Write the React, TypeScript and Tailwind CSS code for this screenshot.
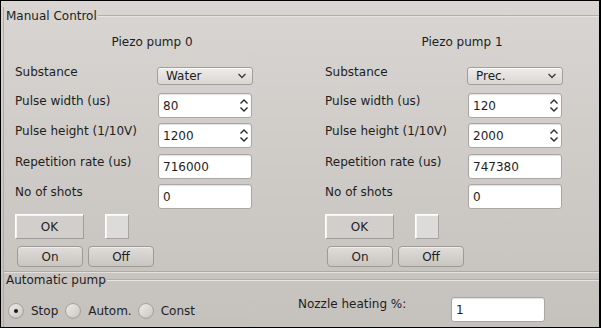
import React from "react";

function Chevron() {
  return (
    <svg width="10" height="6" viewBox="0 0 10 6" className="block">
      <path d="M1.5 1 L5 4.5 L8.5 1" fill="none" stroke="#3a3a3a" strokeWidth="1.3" />
    </svg>
  );
}

function SpinArrows() {
  return (
    <svg width="10" height="15" viewBox="0 0 10 15" className="block">
      <path d="M1.5 5.5 L5 2 L8.5 5.5" fill="none" stroke="#2a2a2a" strokeWidth="1.4" />
      <path d="M1.5 9.5 L5 13 L8.5 9.5" fill="none" stroke="#2a2a2a" strokeWidth="1.4" />
    </svg>
  );
}

function Combo({ value }: { value: string }) {
  return (
    <div className="mt-[2px] flex h-[18px] w-[96px] items-center justify-between rounded-[3px] border border-[#a29e9a] bg-linear-to-b from-[#efedeb] to-[#d9d6d3] pl-[8px] pr-[5px] shadow-[inset_0_1px_0_#fafafa]">
      <span className="leading-[14px]">{value}</span>
      <Chevron />
    </div>
  );
}

function Field({ value, spin }: { value: string; spin?: boolean }) {
  return (
    <div className="flex h-[25px] w-[94px] items-center justify-between rounded-[3px] border border-[#aaa6a2] bg-white pl-[4px] pr-[2px] shadow-[inset_0_1px_1px_rgba(0,0,0,0.12)]">
      <span className="leading-[14px] pt-[1px]">{value}</span>
      {spin ? <SpinArrows /> : null}
    </div>
  );
}

function Row({ label, children, mt }: { label: string; children: React.ReactNode; mt: string }) {
  return (
    <div className={`flex items-start ${mt}`}>
      <div className="w-[143px] pt-[1px] leading-[14px]">{label}</div>
      {children}
    </div>
  );
}

function Pump({
  title,
  substance,
  width,
  height,
  rate,
  shots,
}: {
  title: string;
  substance: string;
  width: string;
  height: string;
  rate: string;
  shots: string;
}) {
  return (
    <div className="flex w-[274px] flex-col">
      <div className="mt-[10px] h-[14px] text-center leading-[14px]">{title}</div>
      <div className="mt-[16px] flex items-start">
        <div className="w-[142px] leading-[14px]">Substance</div>
        <Combo value={substance} />
      </div>
      <Row label="Pulse width (us)" mt="mt-[8px]">
        <Field value={width} spin />
      </Row>
      <Row label="Pulse height (1/10V)" mt="mt-[5px]">
        <Field value={height} spin />
      </Row>
      <Row label="Repetition rate (us)" mt="mt-[6px]">
        <Field value={rate} />
      </Row>
      <Row label="No of shots" mt="mt-[5px]">
        <Field value={shots} />
      </Row>
      <div className="mt-[5px] flex items-start">
        <div className="flex h-[25px] w-[69px] items-center justify-center border border-t-white border-l-white border-r-[#a19d99] border-b-[#a19d99] bg-[#d2cecb] shadow-[inset_1px_1px_0_#f4f3f2]">
          OK
        </div>
        <div className="ml-[21px] h-[25px] w-[24px] border border-t-white border-l-white border-r-[#a8a4a0] border-b-[#a8a4a0] bg-[#dcdbda] shadow-[inset_1px_1px_0_#f4f4f4]" />
      </div>
      <div className="mt-[7px] ml-[2px] flex items-start">
        <div className="flex h-[21px] w-[66px] items-center justify-center rounded-[4px] border border-[#9d9995] bg-linear-to-b from-[#dfdcd9] to-[#c9c5c1] shadow-[inset_0_1px_0_#f0eeec]">
          On
        </div>
        <div className="ml-[5px] flex h-[21px] w-[66px] items-center justify-center rounded-[4px] border border-[#9d9995] bg-linear-to-b from-[#dfdcd9] to-[#c9c5c1] shadow-[inset_0_1px_0_#f0eeec]">
          Off
        </div>
      </div>
    </div>
  );
}

function Radio({ checked }: { checked?: boolean }) {
  return (
    <div className="flex h-[16px] w-[16px] items-center justify-center rounded-full border border-[#a5a19d] bg-linear-to-br from-[#eceae8] to-[#cbc7c3] shadow-[inset_0_-1px_1px_rgba(0,0,0,0.08)]">
      {checked ? <div className="h-[4px] w-[4px] rounded-full bg-[#1a1a1a]" /> : null}
    </div>
  );
}

function Etched() {
  return <div className="h-[2px] flex-1 border-t border-b border-t-[#b2aeaa] border-b-[#e6e4e2]" />;
}

export default function App() {
  return (
    <div className="h-[328px] w-[601px] overflow-hidden border-t border-l border-b border-r-2 border-black bg-linear-to-b from-[#d8d5d2] to-[#c5c1bd] font-['DejaVu_Sans',sans-serif] text-[12px] text-[#1e1e1e]">
      <div className="ml-[2px] mt-[14px] border-l border-b border-l-[#aeaaa6] border-b-[#e2e0de] shadow-[0_-1px_0_#aeaaa6_inset]">
        <div className="-mt-[8px] flex h-[18px] items-center">
          <span className="pl-[2px] pr-[1px] leading-[14px]">Manual Control</span>
          <Etched />
        </div>
        <div className="ml-[11px] flex pb-[5px]">
          <Pump title="Piezo pump 0" substance="Water" width="80" height="1200" rate="716000" shots="0" />
          <div className="ml-[36px]">
            <Pump title="Piezo pump 1" substance="Prec." width="120" height="2000" rate="747380" shots="0" />
          </div>
        </div>
      </div>
      <div className="ml-[2px] mt-[6px] h-[60px] border-l border-l-[#aeaaa6]">
        <div className="-mt-[8px] flex h-[18px] items-center">
          <span className="pl-[2px] pr-[1px] leading-[14px]">Automatic pump</span>
          <Etched />
        </div>
        <div className="mt-[8px] flex items-start">
          <div className="ml-[4px] mt-[6px] flex w-[290px] items-center">
            <Radio checked />
            <span className="ml-[7px] leading-[14px]">Stop</span>
            <div className="ml-[7px]">
              <Radio />
            </div>
            <span className="ml-[7px] leading-[14px]">Autom.</span>
            <div className="ml-[6px]">
              <Radio />
            </div>
            <span className="ml-[7px] leading-[14px]">Const</span>
          </div>
          <div className="w-[153px] leading-[14px]">Nozzle heating %:</div>
          <Field value="1" />
        </div>
      </div>
    </div>
  );
}
